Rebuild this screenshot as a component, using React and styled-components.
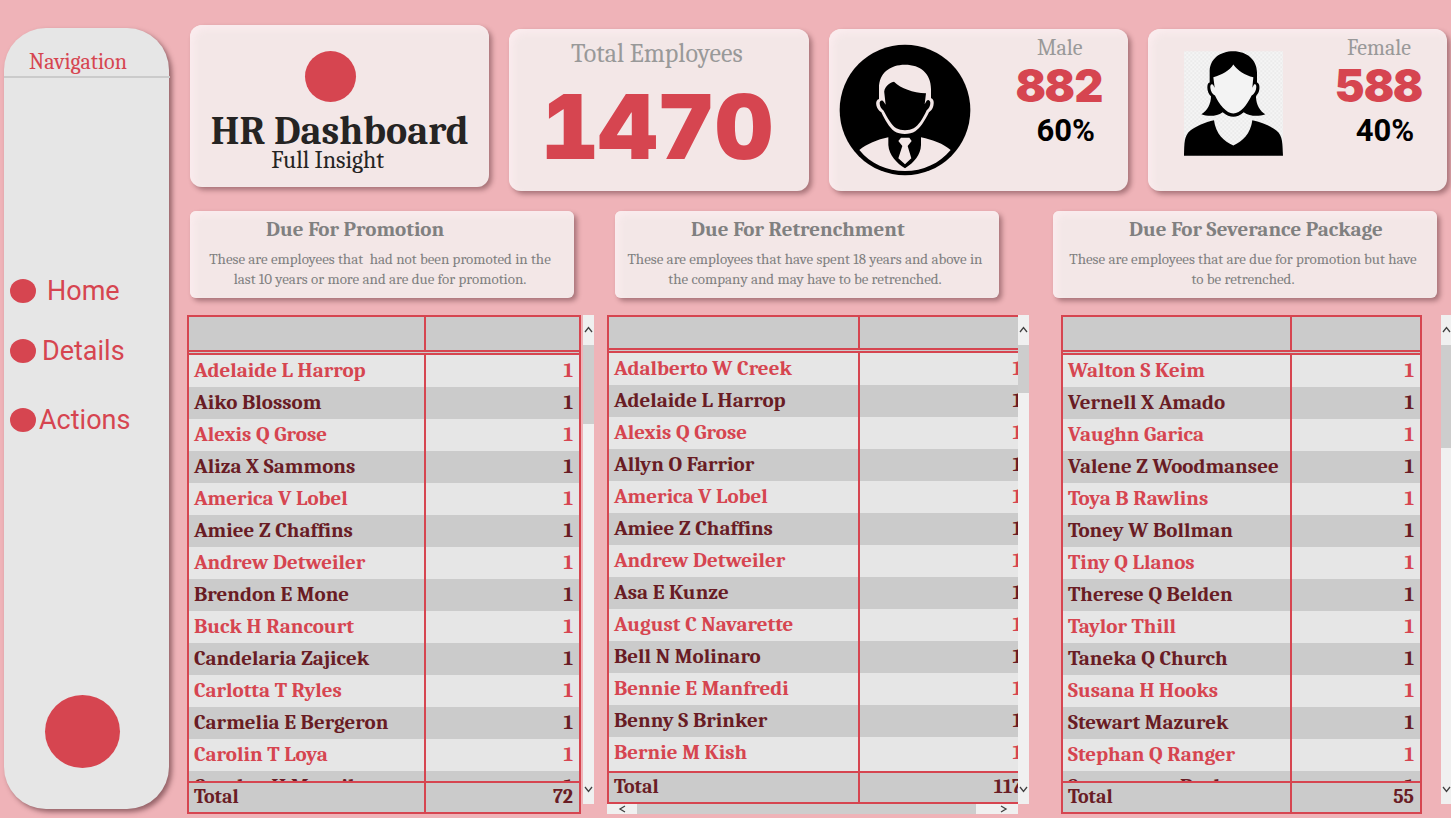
import React from "react";
import styled, { createGlobalStyle } from "styled-components";

const red = "#d64550";
const maroon = "#691c24";
const serif = 'Cambria, "Liberation Serif", serif';

const GlobalStyle = createGlobalStyle`
  * { box-sizing: border-box; }
  body { margin: 0; background: #efb3b8; font-family: ${serif}; }
  h1, h2, p, ul { margin: 0; padding: 0; font-weight: normal; }
  button { border: 0; padding: 0; background: none; cursor: pointer; }
`;

const Page = styled.div`
  display: grid;
  grid-template-columns: 165px minmax(0, 1fr);
  column-gap: 18px;
  height: 100vh;
  min-height: 600px;
  padding: 25px 0 4px 4px;
  overflow: hidden;
`;

const Sidebar = styled.nav`
  display: flex;
  flex-direction: column;
  margin: 3px 0 5px;
  padding-bottom: 41px;
  border-radius: 42px;
  background: #e6e6e6;
  box-shadow: 3px 3px 5px rgba(60, 20, 25, 0.5);
`;

const SidebarTitle = styled.h2`
  width: calc(100% + 1px);
  padding: 21px 0 1px 25px;
  border-bottom: 2px solid #cbcbcb;
  color: ${red};
  font-size: 22px;
  line-height: 26px;
`;

const NavList = styled.ul`
  display: flex;
  flex-direction: column;
  gap: 36px;
  margin-top: 201px;
  padding-left: 6px;
  list-style: none;
`;

const NavLink = styled.a`
  display: flex;
  align-items: center;
  gap: ${(p) => p.$gap}px;
  height: 24px;
  margin-top: ${(p) => p.$space || 0}px;
  color: ${red};
  font-family: Roboto, sans-serif;
  font-size: 27px;
  line-height: 24px;
  text-decoration: none;
  &::before {
    content: "";
    width: 26px;
    height: 24px;
    border-radius: 50%;
    background: ${red};
  }
`;

const RoundButton = styled.button`
  width: 75px;
  height: 73px;
  margin: auto 0 0 41px;
  border-radius: 50%;
  background: ${red};
`;

const Main = styled.main`
  display: flex;
  flex-direction: column;
  min-width: 0;
  min-height: 0;
`;

const KpiRow = styled.section`
  display: grid;
  grid-template-columns: repeat(4, minmax(0, 1fr));
  align-items: end;
  gap: 20px;
  height: 166px;
  padding: 0 4px 0 3px;
`;

const Card = styled.article`
  border-radius: 12px;
  background: #f3e7e7;
  box-shadow: 3px 3px 5px rgba(60, 20, 25, 0.4), inset 4px 4px 7px #fbecee;
`;

const KpiCard = styled(Card)`
  display: flex;
  justify-content: space-between;
  height: 162px;
  padding: 6px 18px 0 10px;
`;

const BrandCard = styled(Card)`
  display: flex;
  flex-direction: column;
  align-items: center;
  align-self: start;
  height: 162px;
  padding-top: 26px;
`;

const BrandMark = styled.span`
  width: 51px;
  height: 51px;
  margin-right: 18px;
  border-radius: 50%;
  background: ${red};
`;

const BrandTitle = styled.h1`
  && { font-weight: bold; }
  margin-top: 9px;
  color: #252423;
  font-size: 40px;
  line-height: 40px;
  white-space: nowrap;
`;

const BrandSubtitle = styled.p`
  margin-right: 24px;
  color: #252423;
  font-size: 24px;
  line-height: 18px;
`;

const TotalCard = styled(Card)`
  height: 162px;
  padding: 10px 4px 0 0;
  text-align: center;
`;

const KpiLabel = styled.p`
  color: #999;
  font-size: ${(p) => (p.$large ? 26 : 22)}px;
  line-height: ${(p) => (p.$large ? 30 : 26)}px;
`;

const KpiValue = styled.p`
  color: ${red};
  font-family: Inter, sans-serif;
  font-size: ${(p) => (p.$large ? 90 : 45)}px;
  font-variant-numeric: tabular-nums;
  font-weight: 900;
  line-height: ${(p) => (p.$large ? 116 : 50)}px;
`;

const KpiShare = styled.p`
  padding: 2px 0 0 12px;
  color: #000;
  font-family: Roboto, sans-serif;
  font-size: 31px;
  font-weight: bold;
  line-height: 36px;
`;

const KpiStack = styled.div`
  width: 100px;
  text-align: center;
`;

const MaleIcon = styled.svg`
  width: 132px;
  height: 132px;
  margin-top: 9px;
`;

const FemaleIcon = styled.svg`
  width: 99px;
  height: 105px;
  margin: 16px 0 0 26px;
`;

const Lists = styled.div`
  display: grid;
  grid-template-columns: 420fr 445fr 399fr;
  flex: 1;
  min-height: 0;
  margin-top: 20px;
`;

const ListSection = styled.section`
  display: grid;
  grid-template-rows: 87px minmax(0, 1fr);
  row-gap: 17px;
  min-width: 0;
  min-height: 0;
`;

const InfoCard = styled(Card)`
  margin: ${(p) => p.$margin};
  padding: 7px 4px 0 0;
  border-radius: 6px;
  color: #808080;
`;

const InfoTitle = styled.h2`
  && { font-weight: bold; }
  padding-left: 76px;
  font-size: 21px;
  line-height: 22px;
  white-space: nowrap;
`;

const InfoText = styled.p`
  margin-top: 9px;
  font-size: 15px;
  line-height: 20px;
  text-align: center;
  white-space: nowrap;
`;

const Visual = styled.div`
  display: grid;
  grid-template-columns: minmax(0, 1fr) ${(p) => p.$bar}px;
  grid-template-rows: minmax(0, 1fr) 10px;
  column-gap: ${(p) => p.$gap}px;
  min-height: 0;
  padding: ${(p) => p.$padding};
`;

const TableView = styled.div`
  grid-row: ${(p) => (p.$wide ? "1" : "1 / 3")};
  min-height: 0;
  overflow: hidden;
`;

const Table = styled.table`
  display: grid;
  grid-template-rows: ${(p) => p.$head}px minmax(0, 1fr) 31px;
  width: ${(p) => (p.$wide ? "calc(100% + 12px)" : "100%")};
  height: 100%;
  border: 2px solid ${red};
  background: #cbcbcb;
  font-size: 21px;
  font-weight: bold;
  thead, tbody, tfoot { display: block; min-height: 0; overflow: hidden; }
  tbody { display: flex; flex-direction: column; }
  tr { display: grid; grid-template-columns: ${(p) => p.$first}px minmax(0, 1fr); }
  th, td { padding: 0 6px 0 5px; text-align: left; white-space: nowrap; }
  tr > :first-child { border-right: 2px solid ${red}; }
  tr > :last-child { text-align: right; }
`;

const HeadRow = styled.tr`
  height: 100%;
  border-bottom: 5px double ${red};
`;

const BodyRow = styled.tr`
  flex: 0 0 32px;
  color: ${maroon};
  line-height: 30px;
  &:nth-child(odd) { background: #e6e6e6; color: ${red}; }
  &:last-child { flex-grow: 1; }
`;

const TotalRow = styled.tr`
  height: 31px;
  border-top: 2px solid ${red};
  color: ${maroon};
  font-size: 20px;
  line-height: 28px;
`;

const ScrollBar = styled.div`
  display: flex;
  flex-direction: ${(p) => (p.$horizontal ? "row" : "column")};
  min-width: 0;
  background: #f0f0f0;
`;

const ScrollButton = styled.button`
  display: flex;
  align-items: center;
  justify-content: center;
  flex: 0 0 30px;
`;

const Thumb = styled.div`
  flex: ${(p) => p.$grow} 0 0;
  background: #cdcdcd;
`;

const Track = styled.div`
  flex: ${(p) => p.$grow} 0 0;
`;

const arrows = {
  Up: "M1 6 4.500 1.500 8 6",
  Down: "M1 2 4.500 6.500 8 2",
  Left: "M7 1 2 4 7 7",
  Right: "M2 1 7 4 2 7",
};

function Arrow({ to }) {
  return (
    <ScrollButton type="button" aria-label={`Scroll ${to.toLowerCase()}`}>
      <svg width="9" height="8" viewBox="0 0 9 8" fill="none" stroke="#404040" strokeWidth="1.3">
        <path d={arrows[to]} />
      </svg>
    </ScrollButton>
  );
}

const lists = [
  {
    title: "Due For Promotion",
    lines: ["These are employees that \u00a0had not been promoted in the", "last 10 years or more and are due for promotion."],
    names: ["Adelaide L Harrop", "Aiko Blossom", "Alexis Q Grose", "Aliza X Sammons", "America V Lobel", "Amiee Z Chaffins", "Andrew Detweiler", "Brendon E Mone", "Buck H Rancourt", "Candelaria Zajicek", "Carlotta T Ryles", "Carmelia E Bergeron", "Carolin T Loya", "Carolyn H Mcneil"],
    total: 72,
    infoMargin: "0 33px 0 3px",
    padding: "0 13px 0 0",
    gap: 2, bar: 11, first: 237, head: 38, thumb: [79, 350],
  },
  {
    title: "Due For Retrenchment",
    lines: ["These are employees that have spent 18 years and above in", "the company and may have to be retrenched."],
    names: ["Adalberto W Creek", "Adelaide L Harrop", "Alexis Q Grose", "Allyn O Farrior", "America V Lobel", "Amiee Z Chaffins", "Andrew Detweiler", "Asa E Kunze", "August C Navarette", "Bell N Molinaro", "Bennie E Manfredi", "Benny S Brinker", "Bernie M Kish"],
    total: 117,
    wide: true,
    infoMargin: "0 53px 0 8px",
    padding: "0 23px 0 0",
    gap: 0, bar: 11, first: 251, head: 36, thumb: [48, 381],
  },
  {
    title: "Due For Severance Package",
    lines: ["These are employees that are due for promotion but have", "to be retrenched."],
    names: ["Walton S Keim", "Vernell X Amado", "Vaughn Garica", "Valene Z Woodmansee", "Toya B Rawlins", "Toney W Bollman", "Tiny Q Llanos", "Therese Q Belden", "Taylor Thill", "Taneka Q Church", "Susana H Hooks", "Stewart Mazurek", "Stephan Q Ranger", "Someranna Beck"],
    total: 55,
    infoMargin: "0 14px 0 1px",
    padding: "0 0 0 9px",
    gap: 19, bar: 10, first: 229, head: 38, thumb: [103, 326],
  },
];

function EmployeeList({ data }) {
  return (
    <ListSection>
      <InfoCard $margin={data.infoMargin}>
        <InfoTitle>{data.title}</InfoTitle>
        <InfoText>{data.lines[0]}<br />{data.lines[1]}</InfoText>
      </InfoCard>
      <Visual $bar={data.bar} $gap={data.gap} $padding={data.padding}>
        <TableView $wide={data.wide}>
          <Table $first={data.first} $head={data.head} $wide={data.wide} aria-label={data.title}>
            <thead>
              <HeadRow><th /><th /></HeadRow>
            </thead>
            <tbody>
              {data.names.map((name) => (
                <BodyRow key={name}><td>{name}</td><td>1</td></BodyRow>
              ))}
            </tbody>
            <tfoot>
              <TotalRow><td>Total</td><td>{data.total}</td></TotalRow>
            </tfoot>
          </Table>
        </TableView>
        <ScrollBar>
          <Arrow to="Up" />
          <Thumb $grow={data.thumb[0]} />
          <Track $grow={data.thumb[1]} />
          <Arrow to="Down" />
        </ScrollBar>
        {data.wide && (
          <ScrollBar $horizontal>
            <Arrow to="Left" />
            <Thumb $grow={340} />
            <Track $grow={12} />
            <Arrow to="Right" />
          </ScrollBar>
        )}
      </Visual>
    </ListSection>
  );
}

function Male() {
  return (
    <MaleIcon viewBox="57 73 396 396" role="img" aria-label="Male employee">
      <circle cx="255" cy="271" r="196" fill="#000" />
      <g fill="#f3e7e7">
        <path d="M177 238V205C177 160 210 135 255 135C301 135 333 161 333 208V236C341 238 343 248 340 259C338 268 333 273 327 278C314 305 300 325 286 335C269 346 240 346 223 335C208 324 195 302 184 278C176 273 171 267 169 257C167 247 170 240 177 238ZM192 248 197 255 193 220C190 207 206 188 222 186C244 207 277 218 318 221L314 254 320 243C325 239 330 242 331 249C331 259 327 266 320 272C308 298 296 317 281 326C267 334 243 334 229 326C214 316 203 295 191 273C183 266 179 260 179 250C179 242 188 239 192 248Z" fillRule="evenodd" />
        <path d="M118 391C140 373 172 360 205 353V376C207 407 230 430 255 446C282 429 302 406 303 376V353C339 361 370 372 392 391C358 432 309 454 255 454C201 454 152 433 118 391Z" />
        <path d="M243 354H268L275 364 263 379 274 416 255 434 235 416 247 379 235 364Z" />
      </g>
    </MaleIcon>
  );
}

function Female() {
  return (
    <FemaleIcon viewBox="161 93 297 314" role="img" aria-label="Female employee">
      <defs>
        <pattern id="weave" width="12" height="12" patternUnits="userSpaceOnUse">
          <path d="M0 0H12V12H0Z" fill="#f5f5f5" />
          <path d="M0 0H6V6H0ZM6 6H12V12H6Z" fill="#ebebeb" />
        </pattern>
      </defs>
      <path d="M161 93H458V407H161Z" fill="url(#weave)" />
      <path d="M238 187V152C239 116 269 93 309 93C350 93 380 119 380 157V187C389 190 389 207 384 218C381 223 377 227 377 231C378 254 389 273 405 282C384 290 359 289 340 276C330 285 319 290 309 290C299 290 288 285 277 276C259 289 234 290 213 282C231 272 242 250 242 228C236 224 231 214 231 202C231 194 233 188 238 187Z" />
      <path d="M249 171C275 164 298 151 309 133C322 151 344 166 369 171L366 203 371 193C378 190 379 199 377 207C375 216 370 222 364 226C351 253 330 280 309 280C288 280 266 252 254 226C246 222 241 214 240 203C239 191 246 190 249 195L253 203Z" fill="#f3f3f3" />
      <path d="M161 407C162 368 161 347 180 331C196 318 225 306 251 300C256 341 281 363 309 376C336 363 361 341 366 300C393 306 423 318 438 331C458 347 456 369 458 407Z" />
    </FemaleIcon>
  );
}

const navItems = [
  { label: "Home", gap: 11 },
  { label: "Details", gap: 6 },
  { label: "Actions", gap: 3, space: 9 },
];

export default function App() {
  return (
    <>
      <GlobalStyle />
      <Page>
        <Sidebar aria-label="Main">
          <SidebarTitle>Navigation</SidebarTitle>
          <NavList>
            {navItems.map((item) => (
              <li key={item.label}>
                <NavLink href="#" $gap={item.gap} $space={item.space}>{item.label}</NavLink>
              </li>
            ))}
          </NavList>
          <RoundButton type="button" aria-label="Menu" />
        </Sidebar>
        <Main>
          <KpiRow>
            <BrandCard>
              <BrandMark />
              <BrandTitle>HR Dashboard</BrandTitle>
              <BrandSubtitle>Full Insight</BrandSubtitle>
            </BrandCard>
            <TotalCard>
              <KpiLabel $large>Total Employees</KpiLabel>
              <KpiValue $large>1470</KpiValue>
            </TotalCard>
            <KpiCard>
              <Male />
              <KpiStack>
                <KpiLabel>Male</KpiLabel>
                <KpiValue>882</KpiValue>
                <KpiShare>60%</KpiShare>
              </KpiStack>
            </KpiCard>
            <KpiCard>
              <Female />
              <KpiStack>
                <KpiLabel>Female</KpiLabel>
                <KpiValue>588</KpiValue>
                <KpiShare>40%</KpiShare>
              </KpiStack>
            </KpiCard>
          </KpiRow>
          <Lists>
            {lists.map((list) => <EmployeeList key={list.title} data={list} />)}
          </Lists>
        </Main>
      </Page>
    </>
  );
}
